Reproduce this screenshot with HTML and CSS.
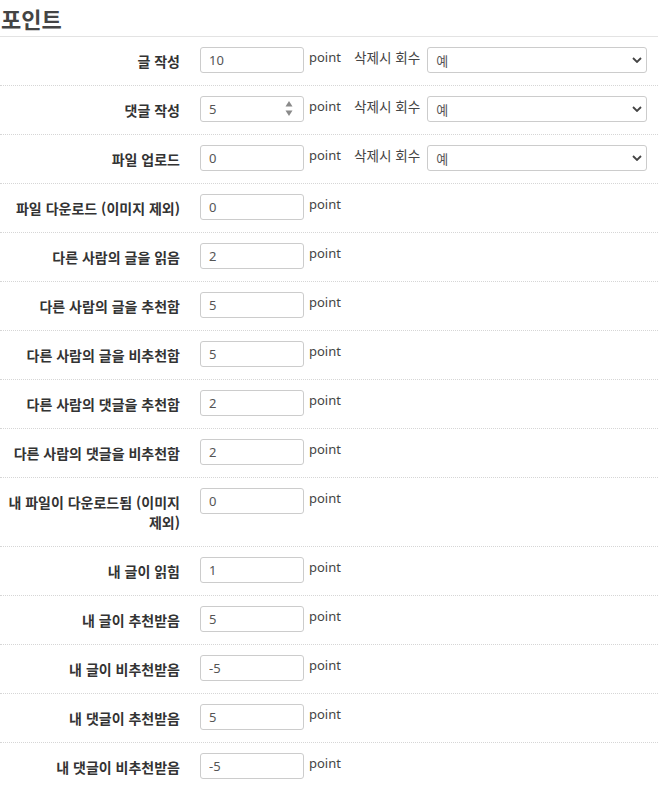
FILE: index.html
```html
<!DOCTYPE html>
<html lang="ko">
<head>
<meta charset="utf-8">
<title>포인트</title>
<link rel="stylesheet" href="styles.css">
</head>
<body>
<h2 class="title">포인트</h2>
<div class="rows">
  <div class="row">
    <label class="lbl">글 작성</label>
    <div class="ctrl">
      <input class="num" type="text" value="10">
      <span class="unit">point</span>
      <span class="del">삭제시 회수</span>
      <div class="sel-wrap">
        <select class="sel"><option>예</option></select>
        <svg class="chev" width="10" height="6" viewBox="0 0 10 6"><path d="M1 1 L5 5 L9 1" fill="none" stroke="#444" stroke-width="1.8"/></svg>
      </div>
    </div>
  </div>
  <div class="row">
    <label class="lbl">댓글 작성</label>
    <div class="ctrl">
      <div class="num-wrap">
        <input class="num" type="text" value="5">
        <svg class="spin" width="8" height="17" viewBox="0 0 8 17"><path d="M4 1 L7.5 6.5 L0.5 6.5 Z" fill="#8a8a8a"/><path d="M0.5 10.5 L7.5 10.5 L4 16 Z" fill="#8a8a8a"/></svg>
      </div>
      <span class="unit">point</span>
      <span class="del">삭제시 회수</span>
      <div class="sel-wrap">
        <select class="sel"><option>예</option></select>
        <svg class="chev" width="10" height="6" viewBox="0 0 10 6"><path d="M1 1 L5 5 L9 1" fill="none" stroke="#444" stroke-width="1.8"/></svg>
      </div>
    </div>
  </div>
  <div class="row">
    <label class="lbl">파일 업로드</label>
    <div class="ctrl">
      <input class="num" type="text" value="0">
      <span class="unit">point</span>
      <span class="del">삭제시 회수</span>
      <div class="sel-wrap">
        <select class="sel"><option>예</option></select>
        <svg class="chev" width="10" height="6" viewBox="0 0 10 6"><path d="M1 1 L5 5 L9 1" fill="none" stroke="#444" stroke-width="1.8"/></svg>
      </div>
    </div>
  </div>
  <div class="row">
    <label class="lbl">파일 다운로드 (이미지 제외)</label>
    <div class="ctrl"><input class="num" type="text" value="0"><span class="unit">point</span></div>
  </div>
  <div class="row">
    <label class="lbl">다른 사람의 글을 읽음</label>
    <div class="ctrl"><input class="num" type="text" value="2"><span class="unit">point</span></div>
  </div>
  <div class="row">
    <label class="lbl">다른 사람의 글을 추천함</label>
    <div class="ctrl"><input class="num" type="text" value="5"><span class="unit">point</span></div>
  </div>
  <div class="row">
    <label class="lbl">다른 사람의 글을 비추천함</label>
    <div class="ctrl"><input class="num" type="text" value="5"><span class="unit">point</span></div>
  </div>
  <div class="row">
    <label class="lbl">다른 사람의 댓글을 추천함</label>
    <div class="ctrl"><input class="num" type="text" value="2"><span class="unit">point</span></div>
  </div>
  <div class="row">
    <label class="lbl">다른 사람의 댓글을 비추천함</label>
    <div class="ctrl"><input class="num" type="text" value="2"><span class="unit">point</span></div>
  </div>
  <div class="row">
    <label class="lbl">내 파일이 다운로드됨 (이미지 제외)</label>
    <div class="ctrl"><input class="num" type="text" value="0"><span class="unit">point</span></div>
  </div>
  <div class="row">
    <label class="lbl">내 글이 읽힘</label>
    <div class="ctrl"><input class="num" type="text" value="1"><span class="unit">point</span></div>
  </div>
  <div class="row">
    <label class="lbl">내 글이 추천받음</label>
    <div class="ctrl"><input class="num" type="text" value="5"><span class="unit">point</span></div>
  </div>
  <div class="row">
    <label class="lbl">내 글이 비추천받음</label>
    <div class="ctrl"><input class="num" type="text" value="-5"><span class="unit">point</span></div>
  </div>
  <div class="row">
    <label class="lbl">내 댓글이 추천받음</label>
    <div class="ctrl"><input class="num" type="text" value="5"><span class="unit">point</span></div>
  </div>
  <div class="row">
    <label class="lbl">내 댓글이 비추천받음</label>
    <div class="ctrl"><input class="num" type="text" value="-5"><span class="unit">point</span></div>
  </div>
</div>
</body>
</html>
```

FILE: styles.css
```css
html, body {
  margin: 0;
  padding: 0;
  background: #fff;
}
body {
  font-family: "Noto Sans", "Noto Sans CJK KR", sans-serif;
  font-size: 13px;
  color: #333;
}
.title {
  margin: 0;
  padding: 2px 0 0 1px;
  height: 34px;
  line-height: 33px;
  font-size: 22px;
  font-weight: bold;
  color: #444;
  border-bottom: 1px solid #e3e3e3;
  font-family: "Noto Sans CJK KR", sans-serif;
}
.row {
  display: flex;
  align-items: flex-start;
  padding: 10px 0 12px;
  border-bottom: 1px dotted #d6d6d6;
}
.lbl {
  width: 180px;
  flex: none;
  box-sizing: border-box;
  padding: 4px 0 2px 8px;
  text-align: right;
  font-weight: bold;
  font-size: 14px;
  line-height: 20px;
  font-family: "Noto Sans CJK KR", sans-serif;
  color: #333;
}
.ctrl {
  display: flex;
  align-items: flex-start;
  margin-left: 20px;
}
.num-wrap {
  position: relative;
}
.num {
  box-sizing: border-box;
  width: 104px;
  height: 26px;
  margin: 0;
  padding: 0 8px;
  border: 1px solid #ccc;
  border-radius: 3px;
  font-family: "Noto Sans", "Noto Sans CJK KR", sans-serif;
  font-size: 13px;
  color: #555;
  background: #fff;
  outline: none;
}
.spin {
  position: absolute;
  left: 85px;
  top: 4px;
}
.unit {
  margin-left: 5px;
  line-height: 20px;
  color: #444;
}
.del {
  margin-left: 13px;
  line-height: 20px;
  font-size: 13.6px;
  color: #444;
  font-family: "Noto Sans CJK KR", sans-serif;
}
.sel-wrap {
  position: relative;
  margin-left: 7px;
}
.sel {
  appearance: none;
  -webkit-appearance: none;
  box-sizing: border-box;
  width: 220px;
  height: 26px;
  margin: 0;
  padding: 0 8px;
  border: 1px solid #ccc;
  border-radius: 3px;
  background: #fff;
  font-family: "Noto Sans CJK KR", sans-serif;
  font-size: 13px;
  color: #555;
  outline: none;
}
.chev {
  position: absolute;
  right: 5px;
  top: 10px;
  pointer-events: none;
}
```
